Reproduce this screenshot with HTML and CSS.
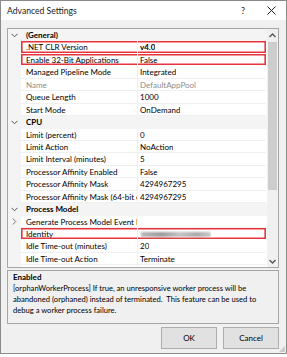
FILE: index.html
```html
<!DOCTYPE html>
<html lang="en">
<head>
  <meta charset="UTF-8">
  <title>Advanced Settings</title>
  <link rel="stylesheet" href="styles.css">
</head>
<body>
  <div class="window">
    <div class="titlebar">
      <span class="title">Advanced Settings</span>
      <span class="help">?</span>
      <svg class="close" width="9" height="9" viewBox="0 0 9 9"><path d="M0.5 0.5 L8.5 8.5 M8.5 0.5 L0.5 8.5" stroke="#222" stroke-width="1"/></svg>
    </div>

    <div class="content">
      <div class="grid">
        <div class="rows">
          <div class="row category">
            <span class="gutter"><svg width="7" height="5" viewBox="0 0 7 5"><path d="M0.5 0.8 L3.5 3.8 L6.5 0.8" fill="none" stroke="#555" stroke-width="1"/></svg></span>
            <span class="cat-name">(General)</span>
          </div>
          <div class="row"><span class="gutter"></span><div class="cells marked"><span class="name">.NET CLR Version</span><span class="value bold">v4.0</span></div></div>
          <div class="row"><span class="gutter"></span><div class="cells marked"><span class="name">Enable 32-Bit Applications</span><span class="value">False</span></div></div>
          <div class="row"><span class="gutter"></span><div class="cells"><span class="name">Managed Pipeline Mode</span><span class="value">Integrated</span></div></div>
          <div class="row readonly"><span class="gutter"></span><div class="cells"><span class="name">Name</span><span class="value">DefaultAppPool</span></div></div>
          <div class="row"><span class="gutter"></span><div class="cells"><span class="name">Queue Length</span><span class="value">1000</span></div></div>
          <div class="row"><span class="gutter"></span><div class="cells"><span class="name">Start Mode</span><span class="value">OnDemand</span></div></div>

          <div class="row category">
            <span class="gutter"><svg width="7" height="5" viewBox="0 0 7 5"><path d="M0.5 0.8 L3.5 3.8 L6.5 0.8" fill="none" stroke="#555" stroke-width="1"/></svg></span>
            <span class="cat-name">CPU</span>
          </div>
          <div class="row"><span class="gutter"></span><div class="cells"><span class="name">Limit (percent)</span><span class="value">0</span></div></div>
          <div class="row"><span class="gutter"></span><div class="cells"><span class="name">Limit Action</span><span class="value">NoAction</span></div></div>
          <div class="row"><span class="gutter"></span><div class="cells"><span class="name">Limit Interval (minutes)</span><span class="value">5</span></div></div>
          <div class="row"><span class="gutter"></span><div class="cells"><span class="name">Processor Affinity Enabled</span><span class="value">False</span></div></div>
          <div class="row"><span class="gutter"></span><div class="cells"><span class="name">Processor Affinity Mask</span><span class="value">4294967295</span></div></div>
          <div class="row"><span class="gutter"></span><div class="cells"><span class="name">Processor Affinity Mask (64-bit option)</span><span class="value">4294967295</span></div></div>

          <div class="row category">
            <span class="gutter"><svg width="7" height="5" viewBox="0 0 7 5"><path d="M0.5 0.8 L3.5 3.8 L6.5 0.8" fill="none" stroke="#555" stroke-width="1"/></svg></span>
            <span class="cat-name">Process Model</span>
          </div>
          <div class="row">
            <span class="gutter"><svg width="5" height="7" viewBox="0 0 5 7"><path d="M0.8 0.5 L3.8 3.5 L0.8 6.5" fill="none" stroke="#777" stroke-width="1"/></svg></span>
            <div class="cells"><span class="name">Generate Process Model Event Log Entry</span><span class="value"></span></div>
          </div>
          <div class="row"><span class="gutter"></span><div class="cells marked"><span class="name">Identity</span><span class="value"><span class="blurred"></span></span></div></div>
          <div class="row"><span class="gutter"></span><div class="cells"><span class="name">Idle Time-out (minutes)</span><span class="value">20</span></div></div>
          <div class="row"><span class="gutter"></span><div class="cells"><span class="name">Idle Time-out Action</span><span class="value">Terminate</span></div></div>
          <div class="row"><span class="gutter"></span><div class="cells"><span class="name">Maximum Worker Processes</span><span class="value">1</span></div></div>
        </div>

        <div class="scrollbar">
          <div class="arrow"><svg width="7" height="5" viewBox="0 0 7 5"><path d="M0.5 4 L3.5 1 L6.5 4" fill="none" stroke="#555" stroke-width="1.3"/></svg></div>
          <div class="track"><div class="thumb"></div></div>
          <div class="arrow"><svg width="7" height="5" viewBox="0 0 7 5"><path d="M0.5 1 L3.5 4 L6.5 1" fill="none" stroke="#555" stroke-width="1.3"/></svg></div>
        </div>
      </div>

      <div class="description">
        <div class="desc-title">Enabled</div>
        <div class="desc-text">[orphanWorkerProcess] If true, an unresponsive worker process will be<br>abandoned (orphaned) instead of terminated.&nbsp; This feature can be used to<br>debug a worker process failure.</div>
      </div>

      <div class="buttons">
        <button class="btn">OK</button>
        <button class="btn">Cancel</button>
      </div>
    </div>

    <div class="grip"></div>
  </div>
</body>
</html>
```

FILE: styles.css
```css
body {
  margin: 0;
  background-color: #ffffff;
  font-family: Lato, "Noto Sans", sans-serif;
  font-size: 8px;
  color: #000;
}
.window {
  position: relative;
  width: 287px;
  height: 354px;
  box-sizing: border-box;
  border: 1px solid #8a8a8a;
  background-color: #f0f0f0;
  display: flex;
  flex-direction: column;
}
.titlebar {
  height: 19px;
  background-color: #ffffff;
  display: flex;
  align-items: center;
  padding: 0 10px 0 6px;
}
.title {
  font-size: 8.6px;
  flex-grow: 1;
  color: #1a1a1a;
}
.help {
  font-size: 9px;
  margin-right: 22px;
  color: #222;
}
.close {
  display: block;
}
.content {
  flex-grow: 1;
  display: flex;
  flex-direction: column;
  padding: 8px 7px 0 6px;
}
.grid {
  height: 240px;
  box-sizing: border-box;
  border: 1px solid #a6a6a6;
  background-color: #ffffff;
  display: flex;
}
.rows {
  flex-grow: 1;
  overflow: hidden;
}
.row {
  height: 12.45px;
  line-height: 12.45px;
  display: flex;
  white-space: nowrap;
}
.gutter {
  width: 13px;
  flex-shrink: 0;
  background-color: #f4f4f4;
  display: flex;
  align-items: center;
  justify-content: center;
}
.category {
  background-color: #f4f4f4;
}
.cat-name {
  font-weight: bold;
  padding-left: 5px;
}
.cells {
  flex-grow: 1;
  display: flex;
  box-sizing: border-box;
  border-bottom: 1px solid #f0f0f0;
  margin-right: 1px;
}
.cells.marked {
  box-shadow: inset 0 0 0 1.6px #e8343c;
  border-bottom-color: transparent;
}
.name {
  width: 111px;
  flex-shrink: 0;
  overflow: hidden;
  padding-left: 5px;
  border-right: 1px solid #f0f0f0;
}
.value {
  padding-left: 2px;
  overflow: hidden;
}
.bold {
  font-weight: bold;
}
.readonly {
  color: #8c8c8c;
}
.blurred {
  display: inline-block;
  width: 70px;
  height: 5px;
  margin-left: 1px;
  vertical-align: middle;
  background: linear-gradient(90deg, #b8b8b8, #9a9a9a 30%, #c4c4c4 55%, #a8a8a8 80%, #c8c8c8);
  filter: blur(1.2px);
}
.scrollbar {
  width: 11px;
  flex-shrink: 0;
  background-color: #f0f0f0;
  display: flex;
  flex-direction: column;
}
.arrow {
  height: 12px;
  display: flex;
  align-items: center;
  justify-content: center;
}
.track {
  flex-grow: 1;
  padding: 1px 1px;
}
.thumb {
  height: 148px;
  background-color: #cdcdcd;
}
.description {
  margin-top: 2px;
  height: 54px;
  box-sizing: border-box;
  border: 1px solid #a6a6a6;
  padding: 1px 5px 0 5px;
  line-height: 11px;
  white-space: nowrap;
  overflow: hidden;
}
.desc-title {
  font-weight: bold;
}
.desc-text {
  font-size: 7.6px;
}
.buttons {
  display: flex;
  justify-content: flex-end;
  gap: 6px;
  margin-top: 3px;
}
.btn {
  width: 56px;
  height: 22px;
  padding: 0;
  font-family: Lato, "Noto Sans", sans-serif;
  font-size: 8px;
  color: #000;
  background-color: #e1e1e1;
  border: 1px solid #adadad;
}
.grip {
  position: absolute;
  right: 1px;
  bottom: 1px;
  width: 6px;
  height: 6px;
  background-image: radial-gradient(circle, #a0a0a0 0.6px, transparent 0.8px);
  background-size: 2px 2px;
  clip-path: polygon(100% 0, 100% 100%, 0 100%);
}
```
